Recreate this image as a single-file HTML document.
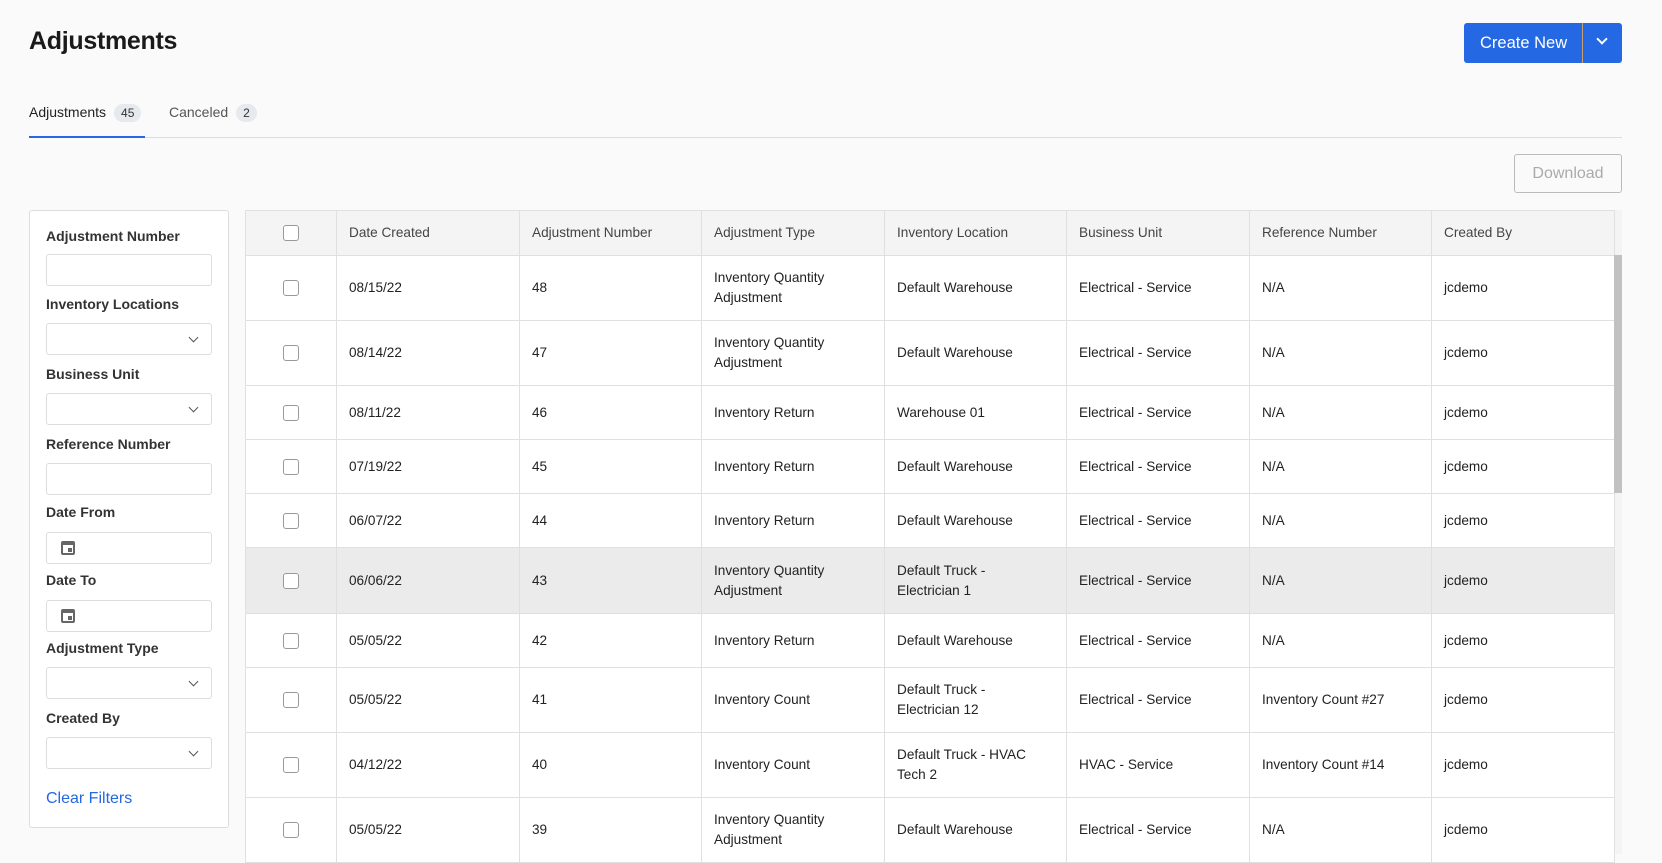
<!DOCTYPE html>
<html><head><meta charset="utf-8"><style>
*{box-sizing:border-box;margin:0;padding:0}
body{width:1662px;height:854px;overflow:hidden;background:#fafafa;font-family:"Liberation Sans",sans-serif;color:#222;position:relative}
.a{position:absolute}
h1{position:absolute;left:29px;top:27px;font-size:25px;font-weight:bold;color:#1a1a1a;letter-spacing:-0.3px}
.btn{left:1464px;top:23px;width:158px;height:40px;background:#2468e3;border-radius:3px;color:#fff;font-size:16.5px}
.tab{font-size:14px;top:104px}
.badge{display:inline-block;background:#e6e9ee;border-radius:9px;font-size:12px;padding:2px 7px;margin-left:8px;color:#333}
.panel{left:29px;top:210px;width:200px;height:618px;background:#fff;border:1px solid #ddd;border-radius:3px}
.lbl{left:46px;font-size:14px;font-weight:bold;color:#333}
.inp{left:46px;width:166px;height:32px;border:1px solid #ddd;border-radius:3px;background:#fff}
.chev{position:absolute;right:14px;top:10px;width:7px;height:7px;border-right:1.5px solid #555;border-bottom:1.5px solid #555;transform:rotate(45deg)}
.cal{position:absolute;left:14px;top:8px;width:14px;height:14px;border:2px solid #666;border-top-width:4px;border-radius:2px}
.cal:after{content:"";position:absolute;right:1px;bottom:1px;width:4px;height:4px;background:#666}
table{position:absolute;left:245px;top:210px;width:1369px;border-collapse:collapse;background:#fff;font-size:13.6px;table-layout:fixed}
td,th{border:1px solid #e0e0e0;padding:0 12px;text-align:left;vertical-align:middle;line-height:20px}
th{background:#f4f4f4;font-weight:normal;color:#444;height:45px}
td.c,th.c{text-align:center;padding:0}
.cb{display:inline-block;width:16px;height:16px;border:1px solid #999;border-radius:3px;background:#fff;vertical-align:middle}
tr.h td{background:#ebebeb}
</style></head><body>
<h1>Adjustments</h1>
<div class="a btn"><span class="a" style="left:16px;top:11px">Create New</span><div class="a" style="left:118px;top:0;width:1px;height:40px;background:#c8a070"></div><div class="a" style="left:134px;top:12px;width:8px;height:8px;border-right:2px solid #fff;border-bottom:2px solid #fff;transform:rotate(45deg)"></div></div>
<div class="a tab" style="left:29px;color:#222">Adjustments<span class="badge">45</span></div>
<div class="a tab" style="left:169px;color:#555">Canceled<span class="badge">2</span></div>
<div class="a" style="left:29px;top:137px;width:1593px;height:1px;background:#ddd"></div>
<div class="a" style="left:29px;top:136px;width:116px;height:2px;background:#2468e3"></div>
<div class="a" style="left:1514px;top:154px;width:108px;height:39px;border:1px solid #bbb;border-radius:3px;background:#fafafa;color:#aaa;font-size:16px;text-align:center;line-height:37px">Download</div>
<div class="a panel"></div>
<div class="a lbl" style="top:228px">Adjustment Number</div><div class="a inp" style="top:254px"></div>
<div class="a lbl" style="top:296px">Inventory Locations</div><div class="a inp" style="top:323px"><i class="chev"></i></div>
<div class="a lbl" style="top:366px">Business Unit</div><div class="a inp" style="top:393px"><i class="chev"></i></div>
<div class="a lbl" style="top:436px">Reference Number</div><div class="a inp" style="top:463px"></div>
<div class="a lbl" style="top:504px">Date From</div><div class="a inp" style="top:532px"><i class="cal"></i></div>
<div class="a lbl" style="top:572px">Date To</div><div class="a inp" style="top:600px"><i class="cal"></i></div>
<div class="a lbl" style="top:640px">Adjustment Type</div><div class="a inp" style="top:667px"><i class="chev"></i></div>
<div class="a lbl" style="top:710px">Created By</div><div class="a inp" style="top:737px"><i class="chev"></i></div>
<div class="a" style="left:46px;top:790px;color:#2468e3;font-size:16px">Clear Filters</div>
<table>
<colgroup><col style="width:91px"><col style="width:183px"><col style="width:182px"><col style="width:183px"><col style="width:182px"><col style="width:183px"><col style="width:182px"><col style="width:183px"></colgroup>
<tr><th class="c"><span class="cb"></span></th><th>Date Created</th><th>Adjustment Number</th><th>Adjustment Type</th><th>Inventory Location</th><th>Business Unit</th><th>Reference Number</th><th>Created By</th></tr>
<tr style="height:65px"><td class="c"><span class="cb"></span></td><td>08/15/22</td><td>48</td><td>Inventory Quantity Adjustment</td><td>Default Warehouse</td><td>Electrical - Service</td><td>N/A</td><td>jcdemo</td></tr>
<tr style="height:65px"><td class="c"><span class="cb"></span></td><td>08/14/22</td><td>47</td><td>Inventory Quantity Adjustment</td><td>Default Warehouse</td><td>Electrical - Service</td><td>N/A</td><td>jcdemo</td></tr>
<tr style="height:54px"><td class="c"><span class="cb"></span></td><td>08/11/22</td><td>46</td><td>Inventory Return</td><td>Warehouse 01</td><td>Electrical - Service</td><td>N/A</td><td>jcdemo</td></tr>
<tr style="height:54px"><td class="c"><span class="cb"></span></td><td>07/19/22</td><td>45</td><td>Inventory Return</td><td>Default Warehouse</td><td>Electrical - Service</td><td>N/A</td><td>jcdemo</td></tr>
<tr style="height:54px"><td class="c"><span class="cb"></span></td><td>06/07/22</td><td>44</td><td>Inventory Return</td><td>Default Warehouse</td><td>Electrical - Service</td><td>N/A</td><td>jcdemo</td></tr>
<tr class="h" style="height:66px"><td class="c"><span class="cb"></span></td><td>06/06/22</td><td>43</td><td>Inventory Quantity Adjustment</td><td>Default Truck -<br>Electrician 1</td><td>Electrical - Service</td><td>N/A</td><td>jcdemo</td></tr>
<tr style="height:54px"><td class="c"><span class="cb"></span></td><td>05/05/22</td><td>42</td><td>Inventory Return</td><td>Default Warehouse</td><td>Electrical - Service</td><td>N/A</td><td>jcdemo</td></tr>
<tr style="height:65px"><td class="c"><span class="cb"></span></td><td>05/05/22</td><td>41</td><td>Inventory Count</td><td>Default Truck -<br>Electrician 12</td><td>Electrical - Service</td><td>Inventory Count #27</td><td>jcdemo</td></tr>
<tr style="height:65px"><td class="c"><span class="cb"></span></td><td>04/12/22</td><td>40</td><td>Inventory Count</td><td>Default Truck - HVAC<br>Tech 2</td><td>HVAC - Service</td><td>Inventory Count #14</td><td>jcdemo</td></tr>
<tr style="height:65px"><td class="c"><span class="cb"></span></td><td>05/05/22</td><td>39</td><td>Inventory Quantity Adjustment</td><td>Default Warehouse</td><td>Electrical - Service</td><td>N/A</td><td>jcdemo</td></tr>
</table>
<div class="a" style="left:1614px;top:210px;width:8px;height:644px;background:#f4f4f4;border-left:1px solid #e0e0e0"></div>
<div class="a" style="left:1614px;top:255px;width:8px;height:238px;background:#c1c1c1"></div>
</body></html>
